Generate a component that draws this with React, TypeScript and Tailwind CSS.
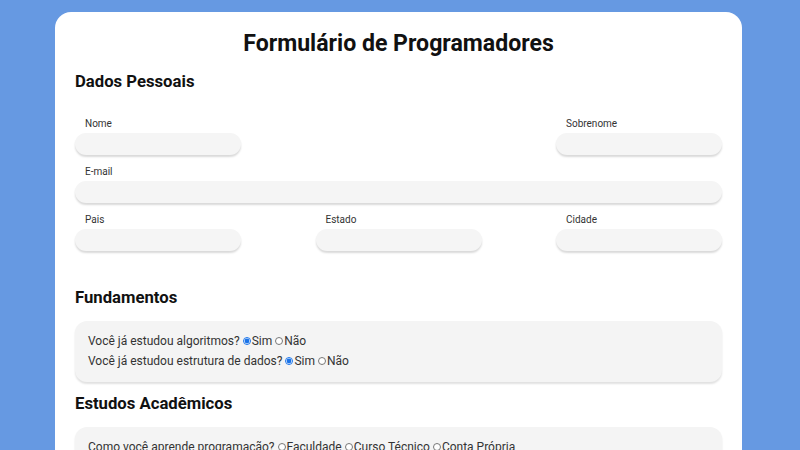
import React from "react";

function Field({ label, className = "" }: { label: string; className?: string }) {
  return (
    <div className={`flex flex-col ${className}`}>
      <label className="h-4 pl-[10px] text-[10px] leading-4 text-[#333]">{label}</label>
      <input
        type="text"
        className="mt-px h-[22px] w-full rounded-full bg-[#f5f5f5] shadow-[0_2px_2px_rgba(0,0,0,0.15)] outline-none"
      />
    </div>
  );
}

function Radio({ name, label, checked = false }: { name: string; label: string; checked?: boolean }) {
  return (
    <label className="inline-flex items-center">
      <input
        type="radio"
        name={name}
        defaultChecked={checked}
        className="m-0 mr-px ml-[3px] h-2 w-2 accent-[#1a73e8]"
      />
      {label}
    </label>
  );
}

export default function App() {
  return (
    <div
      className="h-[450px] overflow-hidden bg-[#6699e2] pt-3"
      style={{ fontFamily: "Roboto, 'Liberation Sans', sans-serif" }}
    >
      <div className="ml-[55px] w-[687px] rounded-2xl bg-white px-5 pt-4 pb-10">
        <h1 className="text-center text-[23.1px] leading-8 font-bold text-[#111]">Formulário de Programadores</h1>
        <h2 className="mt-2 text-[16.7px] leading-7 font-bold text-[#111]">Dados Pessoais</h2>

        <div className="mt-5 flex flex-col gap-[9px]">
          <div className="flex justify-between">
            <Field label="Nome" className="w-[166px]" />
            <Field label="Sobrenome" className="w-[166px]" />
          </div>
          <Field label="E-mail" />
          <div className="flex justify-between">
            <Field label="Pais" className="w-[166px]" />
            <Field label="Estado" className="w-[166px]" />
            <Field label="Cidade" className="w-[166px]" />
          </div>
        </div>

        <h2 className="mt-[33px] text-[16.7px] leading-7 font-bold text-[#111]">Fundamentos</h2>
        <div className="mt-[9px] rounded-xl bg-[#f4f4f4] px-[13px] pt-[10px] pb-[11px] text-xs leading-5 text-[#333] shadow-[0_2px_2px_rgba(0,0,0,0.12)]">
          <div className="flex items-center">
            <span>Você já estudou algoritmos?</span>
            <Radio name="alg" label="Sim" checked />
            <Radio name="alg" label="Não" />
          </div>
          <div className="flex items-center">
            <span>Você já estudou estrutura de dados?</span>
            <Radio name="ed" label="Sim" checked />
            <Radio name="ed" label="Não" />
          </div>
        </div>

        <h2 className="mt-2 text-[16.7px] leading-7 font-bold text-[#111]">Estudos Acadêmicos</h2>
        <div className="mt-[9px] rounded-xl bg-[#f4f4f4] px-[13px] pt-[10px] pb-[11px] text-xs leading-5 text-[#333] shadow-[0_2px_2px_rgba(0,0,0,0.12)]">
          <div className="flex items-center">
            <span>Como você aprende programação?</span>
            <Radio name="learn" label="Faculdade" />
            <Radio name="learn" label="Curso Técnico" />
            <Radio name="learn" label="Conta Própria" />
          </div>
          <div className="flex items-center">
            <span>Você tem formação?</span>
            <Radio name="form" label="Sim" />
            <Radio name="form" label="Não" />
          </div>
        </div>
      </div>
    </div>
  );
}
